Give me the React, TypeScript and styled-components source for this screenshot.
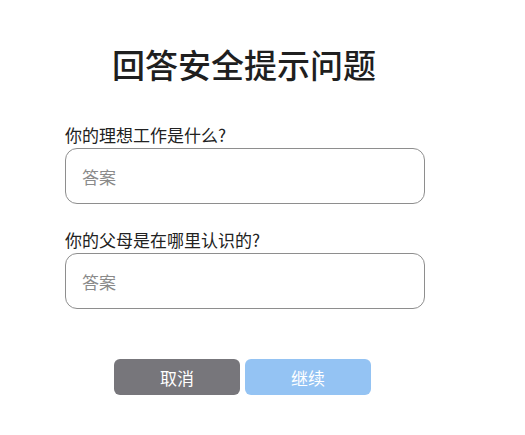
import React from 'react'
import styled, { createGlobalStyle } from 'styled-components'

const GlobalStyle = createGlobalStyle`
  body {
    margin: 0;
    background: #fff;
    font-family: 'Noto Sans CJK SC', 'Noto Sans', sans-serif;
    color: #222;
  }
`

const Page = styled.div`
  width: 525px;
  height: 435px;
  box-sizing: border-box;
  padding: 41px 0 0 65px;
`

const Form = styled.form`
  width: 360px;
  display: flex;
  flex-direction: column;
`

const Title = styled.h1`
  margin: 0 0 37px;
  font-size: 33px;
  font-weight: 500;
  line-height: 46px;
  text-align: center;
  color: #1f1f1f;
  padding-right: 2px;
`

const Field = styled.div`
  display: flex;
  flex-direction: column;
  gap: 2px;
  margin-bottom: 25px;
`

const Label = styled.label`
  font-size: 17px;
  line-height: 22px;
  color: #222;
`

const Input = styled.input`
  box-sizing: border-box;
  width: 360px;
  height: 56px;
  padding: 0 16px;
  border: 1px solid #8e8e8e;
  border-radius: 12px;
  font-family: inherit;
  font-size: 17px;
  color: #222;
  outline: none;

  &::placeholder {
    color: #8a8a8a;
  }
`

const Actions = styled.div`
  display: flex;
  justify-content: center;
  gap: 5px;
  margin-top: 25px;
  padding-right: 5px;
`

const Button = styled.button<{ $primary?: boolean }>`
  width: 126px;
  height: 36px;
  border: none;
  border-radius: 6px;
  font-family: inherit;
  font-size: 17px;
  color: #fff;
  background: ${(p) => (p.$primary ? '#94c3f3' : '#77767b')};
  cursor: pointer;
`

const questions = ['你的理想工作是什么?', '你的父母是在哪里认识的?']

export default function App() {
  return (
    <Page>
      <GlobalStyle />
      <Form onSubmit={(e) => e.preventDefault()}>
        <Title>回答安全提示问题</Title>
        {questions.map((q, i) => (
          <Field key={i}>
            <Label htmlFor={`answer-${i}`}>{q}</Label>
            <Input id={`answer-${i}`} placeholder="答案" />
          </Field>
        ))}
        <Actions>
          <Button type="button">取消</Button>
          <Button type="submit" $primary>
            继续
          </Button>
        </Actions>
      </Form>
    </Page>
  )
}
